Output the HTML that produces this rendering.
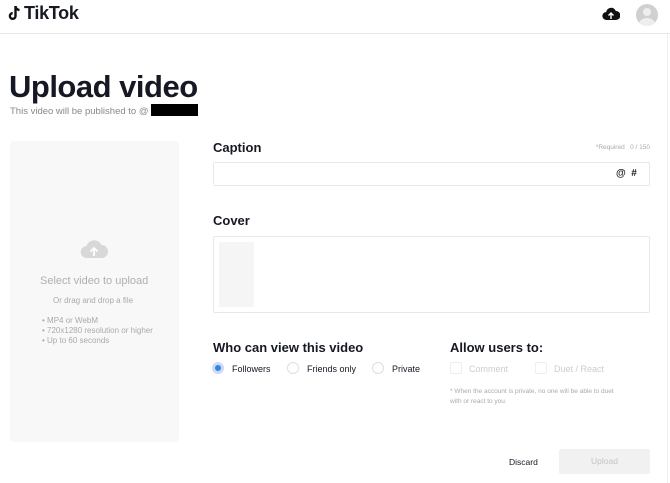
<!DOCTYPE html>
<html><head><style>
*{margin:0;padding:0;box-sizing:border-box}
body{width:670px;height:483px;background:#fff;font-family:"Liberation Sans",sans-serif;position:relative;overflow:hidden;color:#161823}
.a{position:absolute;white-space:nowrap}
.h{font-weight:bold;font-size:13px;color:#161823}
.r{width:12px;height:12px;border:1px solid #ddd;border-radius:50%}
.c{width:12px;height:12px;border:1px solid #eee;border-radius:2px}
</style></head><body>
<div class="a" style="left:0;top:33px;width:670px;height:1px;background:#e8e8e8"></div>
<div class="a" style="left:667px;top:34px;width:1px;height:449px;background:#eee"></div>
<svg class="a" style="left:7px;top:5px" width="15" height="17" viewBox="0 0 15 17"><path d="M8.5 1v10a2.8 2.8 0 1 1-2.8-2.8" fill="none" stroke="#111" stroke-width="2.4"/><path d="M8.5 1.5c.5 2.2 2 3.3 4 3.5" fill="none" stroke="#111" stroke-width="2.4"/></svg>
<div class="a" style="left:24px;top:3px;font-size:18px;font-weight:bold;letter-spacing:-0.3px">TikTok</div>
<svg class="a" style="left:602px;top:7px" width="18" height="14" viewBox="0 0 18 14"><path d="M4.5 13a4 4 0 0 1-.3-8A5 5 0 0 1 13.8 4a4.5 4.5 0 0 1 .2 9z" fill="#111"/><path d="M9 12V6M6.5 8.5 9 6l2.5 2.5" stroke="#fff" stroke-width="1.4" fill="none"/></svg>
<div class="a" style="left:636px;top:4px;width:22px;height:22px;border-radius:50%;background:#d0d0d0;overflow:hidden"><div class="a" style="left:7px;top:4px;width:8px;height:8px;border-radius:50%;background:#eee"></div><div class="a" style="left:3px;top:14px;width:16px;height:12px;border-radius:50%;background:#eee"></div></div>
<div class="a" style="left:9px;top:69px;font-size:31px;font-weight:bold;letter-spacing:-0.5px">Upload video</div>
<div class="a" style="left:10px;top:106px;font-size:9.5px;color:#888">This video will be published to @</div>
<div class="a" style="left:151px;top:104px;width:47px;height:12px;background:#000"></div>
<div class="a" style="left:10px;top:141px;width:169px;height:301px;background:#f8f8f8;border-radius:4px"></div>
<svg class="a" style="left:80px;top:238px" width="28" height="22" viewBox="0 0 28 22"><path d="M7 20a6 6 0 0 1-.5-12A8 8 0 0 1 21.5 7a6.5 6.5 0 0 1 .2 13z" fill="#d8d8d8"/><path d="M14 18V10M10.5 13.5 14 10l3.5 3.5" stroke="#fff" stroke-width="1.8" fill="none"/></svg>
<div class="a" style="left:40px;top:275px;font-size:11px;color:#b0b0b0">Select video to upload</div>
<div class="a" style="left:53px;top:296px;font-size:8px;color:#aaa">Or drag and drop a file</div>
<div class="a" style="left:42px;top:316px;font-size:8px;color:#aaa;line-height:10px">• MP4 or WebM<br>• 720x1280 resolution or higher<br>• Up to 60 seconds</div>
<div class="a h" style="left:213px;top:140px">Caption</div>
<div class="a" style="right:20px;top:144px;font-size:6.5px;color:#aaa">*Required &nbsp;&nbsp;0 / 150</div>
<div class="a" style="left:213px;top:162px;width:437px;height:24px;border:1px solid #e8e8e8;border-radius:2px"></div>
<div class="a" style="left:616px;top:168px;font-size:10px;font-weight:bold">@ &nbsp;#</div>
<div class="a h" style="left:213px;top:213px">Cover</div>
<div class="a" style="left:213px;top:236px;width:437px;height:77px;border:1px solid #e8e8e8;border-radius:2px"></div>
<div class="a" style="left:219px;top:242px;width:35px;height:65px;background:#f5f5f5"></div>
<div class="a h" style="left:213px;top:340px">Who can view this video</div>
<div class="a h" style="left:450px;top:340px">Allow users to:</div>
<div class="a r" style="left:212px;top:362px;border:3px solid #c9dcf4;background:#3b82e0"></div>
<div class="a" style="left:232px;top:364px;font-size:9px">Followers</div>
<div class="a r" style="left:287px;top:362px"></div>
<div class="a" style="left:307px;top:364px;font-size:9px">Friends only</div>
<div class="a r" style="left:372px;top:362px"></div>
<div class="a" style="left:392px;top:364px;font-size:9px">Private</div>
<div class="a c" style="left:450px;top:362px"></div>
<div class="a" style="left:469px;top:364px;font-size:9px;color:#ccc">Comment</div>
<div class="a c" style="left:535px;top:362px"></div>
<div class="a" style="left:554px;top:364px;font-size:9px;color:#ccc">Duet / React</div>
<div class="a" style="left:450px;top:387px;font-size:6.5px;color:#aaa;line-height:9.5px">* When the account is private, no one will be able to duet<br>with or react to you.</div>
<div class="a" style="left:509px;top:457px;font-size:8.5px">Discard</div>
<div class="a" style="left:559px;top:449px;width:91px;height:25px;background:#f1f1f1;border-radius:2px;font-size:8.5px;color:#c4c4c4;text-align:center;line-height:25px">Upload</div>
</body></html>
